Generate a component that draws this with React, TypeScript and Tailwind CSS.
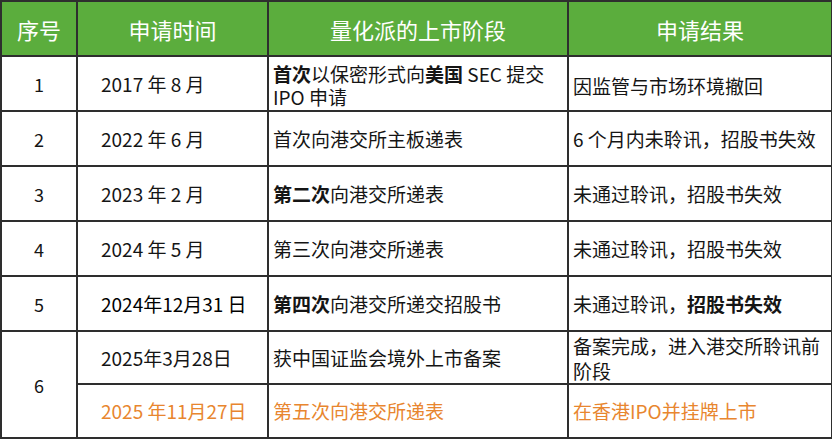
import React from "react";

const font = { fontFamily: '"Noto Sans CJK SC", "Noto Sans", sans-serif' };

function B({ children }: { children: React.ReactNode }) {
  return <span className="font-bold">{children}</span>;
}

export default function App() {
  const td = "border-2 border-[#2e2e2e] p-0 align-middle";
  return (
    <div className="w-[832px] h-[440px] bg-white overflow-hidden" style={font}>
      <table className="table-fixed border-collapse w-[831px] text-[19px] leading-[22px] text-[#151515]">
        <colgroup>
          <col className="w-[76px]" />
          <col className="w-[191px]" />
          <col className="w-[300px]" />
          <col className="w-[264px]" />
        </colgroup>
        <thead>
          <tr className="h-[55px] bg-[#5bad3d] text-white text-[22px]">
            <th className={`${td} font-normal text-center`}>序号</th>
            <th className={`${td} font-normal text-center`}>申请时间</th>
            <th className={`${td} font-normal text-center`}>量化派的上市阶段</th>
            <th className={`${td} font-normal text-center`}>申请结果</th>
          </tr>
        </thead>
        <tbody>
          <tr className="h-[55px]">
            <td className={`${td} text-center text-[18px]`}>1</td>
            <td className={`${td} pl-[23px]`}>2017 年 8 月</td>
            <td className={`${td} pl-[4px] pt-[3px] leading-[23px]`}>
              <B>首次</B>以保密形式向<B>美国</B> SEC 提交
              <br />
              IPO 申请
            </td>
            <td className={`${td} pl-[4px] pt-[4px]`}>因监管与市场环境撤回</td>
          </tr>
          <tr className="h-[55px]">
            <td className={`${td} text-center text-[18px]`}>2</td>
            <td className={`${td} pl-[23px]`}>2022 年 6 月</td>
            <td className={`${td} pl-[4px]`}>首次向港交所主板递表</td>
            <td className={`${td} pl-[4px]`}>6 个月内未聆讯，招股书失效</td>
          </tr>
          <tr className="h-[55px]">
            <td className={`${td} text-center text-[18px]`}>3</td>
            <td className={`${td} pl-[23px]`}>2023 年 2 月</td>
            <td className={`${td} pl-[4px]`}>
              <B>第二次</B>向港交所递表
            </td>
            <td className={`${td} pl-[4px]`}>未通过聆讯，招股书失效</td>
          </tr>
          <tr className="h-[55px]">
            <td className={`${td} text-center text-[18px]`}>4</td>
            <td className={`${td} pl-[23px]`}>2024 年 5 月</td>
            <td className={`${td} pl-[4px]`}>第三次向港交所递表</td>
            <td className={`${td} pl-[4px]`}>未通过聆讯，招股书失效</td>
          </tr>
          <tr className="h-[55px]">
            <td className={`${td} text-center text-[18px]`}>5</td>
            <td className={`${td} pl-[23px] text-black`}>2024年12月31 日</td>
            <td className={`${td} pl-[4px]`}>
              <B>第四次</B>向港交所递交招股书
            </td>
            <td className={`${td} pl-[4px]`}>
              未通过聆讯，<B>招股书失效</B>
            </td>
          </tr>
          <tr className="h-[53px]">
            <td rowSpan={2} className={`${td} text-center text-[18px]`}>
              6
            </td>
            <td className={`${td} pl-[23px]`}>2025年3月28日</td>
            <td className={`${td} pl-[4px]`}>获中国证监会境外上市备案</td>
            <td className={`${td} pl-[4px] leading-[25px]`}>
              备案完成，进入港交所聆讯前
              <br />
              阶段
            </td>
          </tr>
          <tr className="h-[54px] text-[#e8862f]">
            <td className={`${td} pl-[23px]`}>2025 年11月27日</td>
            <td className={`${td} pl-[4px]`}>第五次向港交所递表</td>
            <td className={`${td} pl-[4px]`}>在香港IPO并挂牌上市</td>
          </tr>
        </tbody>
      </table>
    </div>
  );
}
